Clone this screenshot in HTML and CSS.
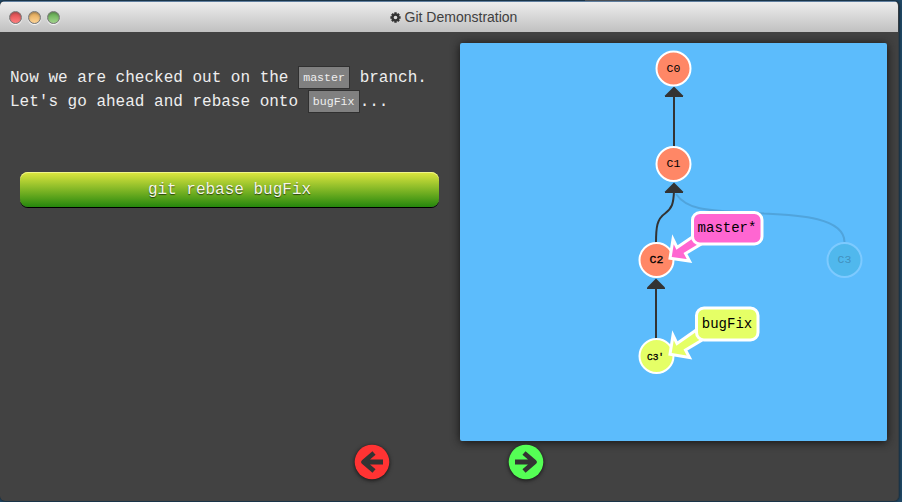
FILE: index.html
```html
<!DOCTYPE html>
<html lang="en">
<head>
<meta charset="utf-8">
<title>Git Demonstration</title>
<link rel="stylesheet" href="styles.css">
</head>
<body>
<main class="window">
  <header class="titlebar">
    <div class="lights"><i class="light red"></i><i class="light amber"></i><i class="light green"></i></div>
    <h1 class="title">
      <svg class="gear" viewBox="0 0 12 12"><g stroke="#333" stroke-width="2.6"><path d="M6 .4V11.6M.4 6H11.6M2.1 2.1L9.9 9.9M9.9 2.1L2.1 9.9"/></g><circle cx="6" cy="6" r="3.2" fill="#dcdcdc" stroke="#333" stroke-width="2.4"/></svg>
      <span>Git Demonstration</span>
    </h1>
  </header>
  <div class="content">
    <section class="lesson">
      <p class="text">Now we are checked out on the <code>master</code> branch.<br>Let's go ahead and rebase onto <code>bugFix</code>...</p>
      <button class="command">git rebase bugFix</button>
    </section>
    <svg class="graph" viewBox="460 43 427 398">
      <path class="edge faded" d="M676 194C690 214 720 210 764 213.5C800 215 844 218 844.5 242"/>
      <path class="edge" d="M674 147V95"/>
      <path class="edge" d="M656 243C656 227 657 219 665 213.5C672 208 673.500 204 674 191"/>
      <path class="edge" d="M656 339V288"/>
      <g class="head"><path d="M674 86.500L683 95.500V97H665V95.500Z"/><path d="M674 182.500L683 191.500V193H665V191.500Z"/><path d="M656 278.500L665 287.500V289H647V287.500Z"/></g>
      <g class="node"><circle cx="673.5" cy="68.500" r="17"/><circle cx="673.5" cy="164" r="17"/><circle cx="656.5" cy="260" r="17"/><circle class="lime" cx="656.5" cy="356" r="17"/></g>
      <g class="ghost"><circle cx="844.5" cy="260" r="17"/></g>
      <g class="label"><text x="673.5" y="72">C0</text><text x="673.5" y="167">C1</text><text class="strong" x="656.5" y="263">C2</text><text class="strong small" x="655.5" y="359.500">C3'</text><text class="dim" x="844.5" y="263">C3</text></g>
      <g class="branch pink"><path d="M670 258.300L673 239.300L677 247.500L693 236.500L702 243.500L685.500 253.500L689.500 261Z"/><rect x="692.500" y="212.500" width="69.500" height="31.500" rx="7.500"/><text x="727" y="231.500">master*</text></g>
      <g class="branch lime"><path d="M670 354.300L673 335.300L677 343.500L697 329.500L703 339.500L685.500 350L689.500 357.500Z"/><rect x="696.500" y="308" width="61.500" height="32" rx="7.500"/><text x="727" y="328">bugFix</text></g>
    </svg>
  </div>
  <nav class="steps">
    <svg class="step" viewBox="-18 -18 36 36"><circle r="17.300" fill="#ff3333"/><path d="M2-9L-8.500 0L2 9M-7 0H11"/></svg>
    <svg class="step" viewBox="-18 -18 36 36"><circle r="17.300" fill="#55ff55"/><path d="M-2-9L8.500 0L-2 9M7 0H-11"/></svg>
  </nav>
</main>
</body>
</html>
```
FILE: styles.css
```css
* { box-sizing: border-box; }
body {
  margin: 0;
  width: 902px;
  height: 502px;
  overflow: hidden;
  background: linear-gradient(90deg, transparent 585px, #69717a 585px 650px, transparent 650px) 0 0 / 902px 1px no-repeat, #204866;
  font-family: "Liberation Mono", monospace;
}
.window {
  width: 899px;
  height: 500px;
  margin-top: 1px;
  background: #424242;
  border-radius: 5px;
  overflow: hidden;
  border-right: 1px solid #343c42;
  box-shadow: 0 0 3px #111;
}
.titlebar {
  display: grid;
  grid-template-columns: 1fr auto 1fr;
  align-items: center;
  height: 31px;
  padding-left: 9px;
  border-top: 1px solid #607f9f;
  background: linear-gradient(#ededed, #c0c0c0);
}
.lights { display: flex; gap: 6px; }
.light {
  width: 13px;
  height: 13px;
  border: 1px solid #777;
  border-radius: 50%;
  box-shadow: 0 1px 1px #fff, inset 0 1px 2px #5558;
}
.red { background: linear-gradient(#dc4549, #ff8080); }
.amber { background: linear-gradient(#dfa451, #ffd596); }
.green { background: linear-gradient(#5ca949, #a2d58d); }
.title {
  display: flex;
  align-items: center;
  gap: 4px;
  margin: 0;
  font: 14px/20px "Liberation Sans", sans-serif;
  color: #404040;
}
.gear { width: 11px; height: 11px; }
.content { display: flex; height: 409px; }
.lesson { width: 460px; padding: 34px 21px 0 10px; }
.text {
  height: 48px;
  margin: 0;
  font-size: 16px;
  line-height: 24px;
  color: #eee;
  white-space: nowrap;
}
.text code {
  display: inline-block;
  width: 52px;
  height: 23px;
  border: 1px solid #303030;
  background: #808080;
  font: 11.600px/21px "Liberation Mono", monospace;
  text-align: center;
  vertical-align: middle;
}
.command {
  display: block;
  width: 419px;
  height: 35px;
  margin: 58px 0 0 10px;
  padding: 0;
  border: 0;
  border-radius: 8px;
  background: linear-gradient(#dfe73f, #25870d);
  box-shadow: 0 1px 0 #000, inset 0 1px 0 #f1f58a;
  color: #f5f5e8;
  font: 16px "Liberation Mono", monospace;
  text-shadow: 0 1px 1px #0009;
}
.graph {
  width: 427px;
  height: 398px;
  margin-top: 11px;
  border-radius: 2px;
  background: #5cbcfc;
  box-shadow: 0 1px 10px #111;
}
.edge { fill: none; stroke: #333; stroke-width: 2; }
.edge.faded { stroke: #50a4dc; }
.head { fill: #333; }
.node circle { fill: #ff8766; stroke: #fff; stroke-width: 2; }
.node .lime { fill: #e5ff66; }
.ghost circle { fill: #50b8ed; stroke: #7dcaff; stroke-width: 2; }
.label text { font-size: 11.500px; text-anchor: middle; }
.label .strong { stroke: #000; stroke-width: .3; }
.label .small { font-size: 9.500px; }
.label .dim { fill: #4291bd; }
.branch path, .branch rect { stroke: #fff; stroke-width: 3; }
.branch text { font-size: 14px; text-anchor: middle; }
.pink { fill: #ff66d1; }
.lime { fill: #e5ff66; }
.branch text { fill: #000; }
.steps { display: flex; gap: 118px; padding: 3px 0 0 354px; }
.step { width: 36px; height: 36px; filter: drop-shadow(0 1px 2px #111); }
.step path { fill: none; stroke: #333; stroke-width: 4.800; stroke-linejoin: round; }
```
